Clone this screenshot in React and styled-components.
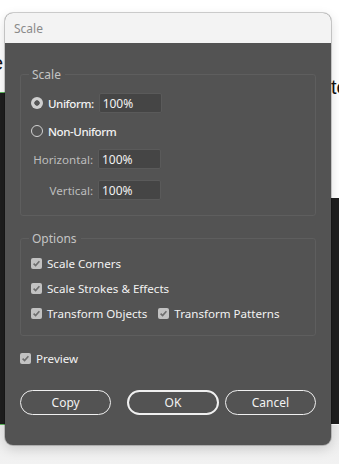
import React from "react";
import styled, { createGlobalStyle } from "styled-components";

const GlobalStyle = createGlobalStyle`
  html, body {
    margin: 0;
    padding: 0;
    background: #ffffff;
  }
  body {
    font-family: "Noto Sans", "Open Sans", Arial, sans-serif;
  }
`;

const Page = styled.div`
  position: relative;
  width: 339px;
  height: 464px;
  overflow: hidden;
  background:
    linear-gradient(#5cb85c, #5cb85c) 0 92px / 5px 1px no-repeat,
    linear-gradient(#1e1e1e, #1e1e1e) 0 93px / 5px 331px no-repeat,
    linear-gradient(#5cb85c, #5cb85c) 0 424px / 5px 1px no-repeat,
    linear-gradient(#1e1e1e, #1e1e1e) 331px 198px / 8px 226px no-repeat,
    linear-gradient(#ebebeb, #f2f2f2) 0 425px / 339px 39px no-repeat,
    #ffffff;
`;

const BackText = styled.span`
  position: absolute;
  top: ${({ $top }) => $top}px;
  left: ${({ $left }) => $left}px;
  font-family: "Liberation Sans", Arial, sans-serif;
  font-size: 20px;
  color: #111;
`;

const Dialog = styled.div`
  position: absolute;
  left: 5px;
  top: 13px;
  width: 326px;
  height: 432px;
  border-radius: 8px;
  overflow: hidden;
  box-shadow: 0 0 0 1px rgba(0, 0, 0, 0.18), 0 4px 12px rgba(0, 0, 0, 0.15);
  display: flex;
  flex-direction: column;
  background: #535353;
`;

const TitleBar = styled.div`
  height: 30px;
  flex: none;
  background: #f3f3f3;
  display: flex;
  align-items: center;
  padding-left: 9px;
  font-size: 12px;
  color: #8a8a8a;
`;

const Body = styled.div`
  flex: 1;
  padding: 23px 15px 0 15px;
  display: flex;
  flex-direction: column;
  color: #e8e8e8;
  font-size: 11.6px;
`;

const Group = styled.fieldset`
  margin: 0;
  border: 1px solid #5e5e5e;
  border-radius: 3px;
  padding: ${({ $pt }) => $pt}px 10px 10px 10px;
  min-width: 0;
  height: ${({ $h }) => $h}px;
  box-sizing: border-box;
  margin-bottom: ${({ $mb }) => $mb}px;
`;

const Legend = styled.legend`
  padding: 0 4px 0 3px;
  margin-left: -2px;
  color: #c4c4c4;
  font-size: 12px;
`;

const Row = styled.div`
  display: flex;
  align-items: center;
  height: ${({ $h }) => $h || 28}px;
  gap: 5px;
`;

const Radio = styled.span`
  width: 12px;
  height: 12px;
  border-radius: 50%;
  box-sizing: border-box;
  flex: none;
  border: ${({ $on }) => ($on ? "none" : "1.3px solid #d2d2d2")};
  background: ${({ $on }) =>
    $on ? "radial-gradient(circle, #555 0 2.4px, #cfcfcf 3px)" : "transparent"};
`;

const Label = styled.span`
  color: ${({ $dim }) => ($dim ? "#bdbdbd" : "#f2f2f2")};
  font-weight: ${({ $bold }) => ($bold ? 500 : 400)};
  letter-spacing: ${({ $bold }) => ($bold ? "-0.45px" : "0")};
  width: ${({ $w }) => ($w ? `${$w}px` : "auto")};
  text-align: ${({ $right }) => ($right ? "right" : "left")};
  white-space: nowrap;
`;

const Input = styled.div`
  width: 63px;
  height: 20px;
  box-sizing: border-box;
  background: #454545;
  border: 1px solid #5a5a5a;
  border-radius: 2px;
  padding-left: 3px;
  display: flex;
  align-items: center;
  color: #f2f2f2;
  font-size: 12px;
`;

const Box = styled.span`
  width: 11px;
  height: 11px;
  border-radius: 2px;
  background: #c2c2c2;
  flex: none;
  display: flex;
  align-items: center;
  justify-content: center;
`;

const CheckWrap = styled.span`
  display: flex;
  align-items: center;
  gap: 5px;
  margin-right: ${({ $gap }) => $gap || 0}px;
`;

const Check = ({ label, gap }) => (
  <CheckWrap $gap={gap}>
    <Box>
      <svg width="9" height="9" viewBox="0 0 9 9">
        <path d="M1.6 4.6 L3.6 6.6 L7.4 2.2" fill="none" stroke="#6e6e6e" strokeWidth="1.6" />
      </svg>
    </Box>
    <Label>{label}</Label>
  </CheckWrap>
);

const Buttons = styled.div`
  display: flex;
  margin-top: 19px;
`;

const Button = styled.div`
  width: 92px;
  height: 25px;
  box-sizing: border-box;
  border: ${({ $primary }) => ($primary ? "2px" : "1.5px")} solid #f0f0f0;
  border-radius: 13px;
  display: flex;
  align-items: center;
  justify-content: center;
  color: #f2f2f2;
  font-size: 12px;
  margin-left: ${({ $ml }) => $ml || 0}px;
`;

export default function App() {
  return (
    <Page>
      <GlobalStyle />
      <BackText $top={52} $left={-8}>e</BackText>
      <BackText $top={76} $left={331}>te</BackText>
      <Dialog>
        <TitleBar>Scale</TitleBar>
        <Body>
          <Group $h={150} $mb={14} $pt={6}>
            <Legend>Scale</Legend>
            <Row $h={28}>
              <Radio $on />
              <Label $bold>Uniform:</Label>
              <Input>100%</Input>
            </Row>
            <Row $h={28}>
              <Radio />
              <Label $bold>Non-Uniform</Label>
            </Row>
            <Row $h={28}>
              <Label $dim $right $w={62}>Horizontal:</Label>
              <Input>100%</Input>
            </Row>
            <Row $h={34}>
              <Label $dim $right $w={62}>Vertical:</Label>
              <Input>100%</Input>
            </Row>
          </Group>
          <Group $h={106} $mb={9} $pt={4}>
            <Legend>Options</Legend>
            <Row $h={25}>
              <Check label="Scale Corners" />
            </Row>
            <Row $h={25}>
              <Check label="Scale Strokes & Effects" />
            </Row>
            <Row $h={25}>
              <Check label="Transform Objects" gap={6} />
              <Check label="Transform Patterns" />
            </Row>
          </Group>
          <Row $h={26}>
            <Check label="Preview" />
          </Row>
          <Buttons>
            <Button>Copy</Button>
            <Button $primary $ml={16}>OK</Button>
            <Button $ml={6}>Cancel</Button>
          </Buttons>
        </Body>
      </Dialog>
    </Page>
  );
}
